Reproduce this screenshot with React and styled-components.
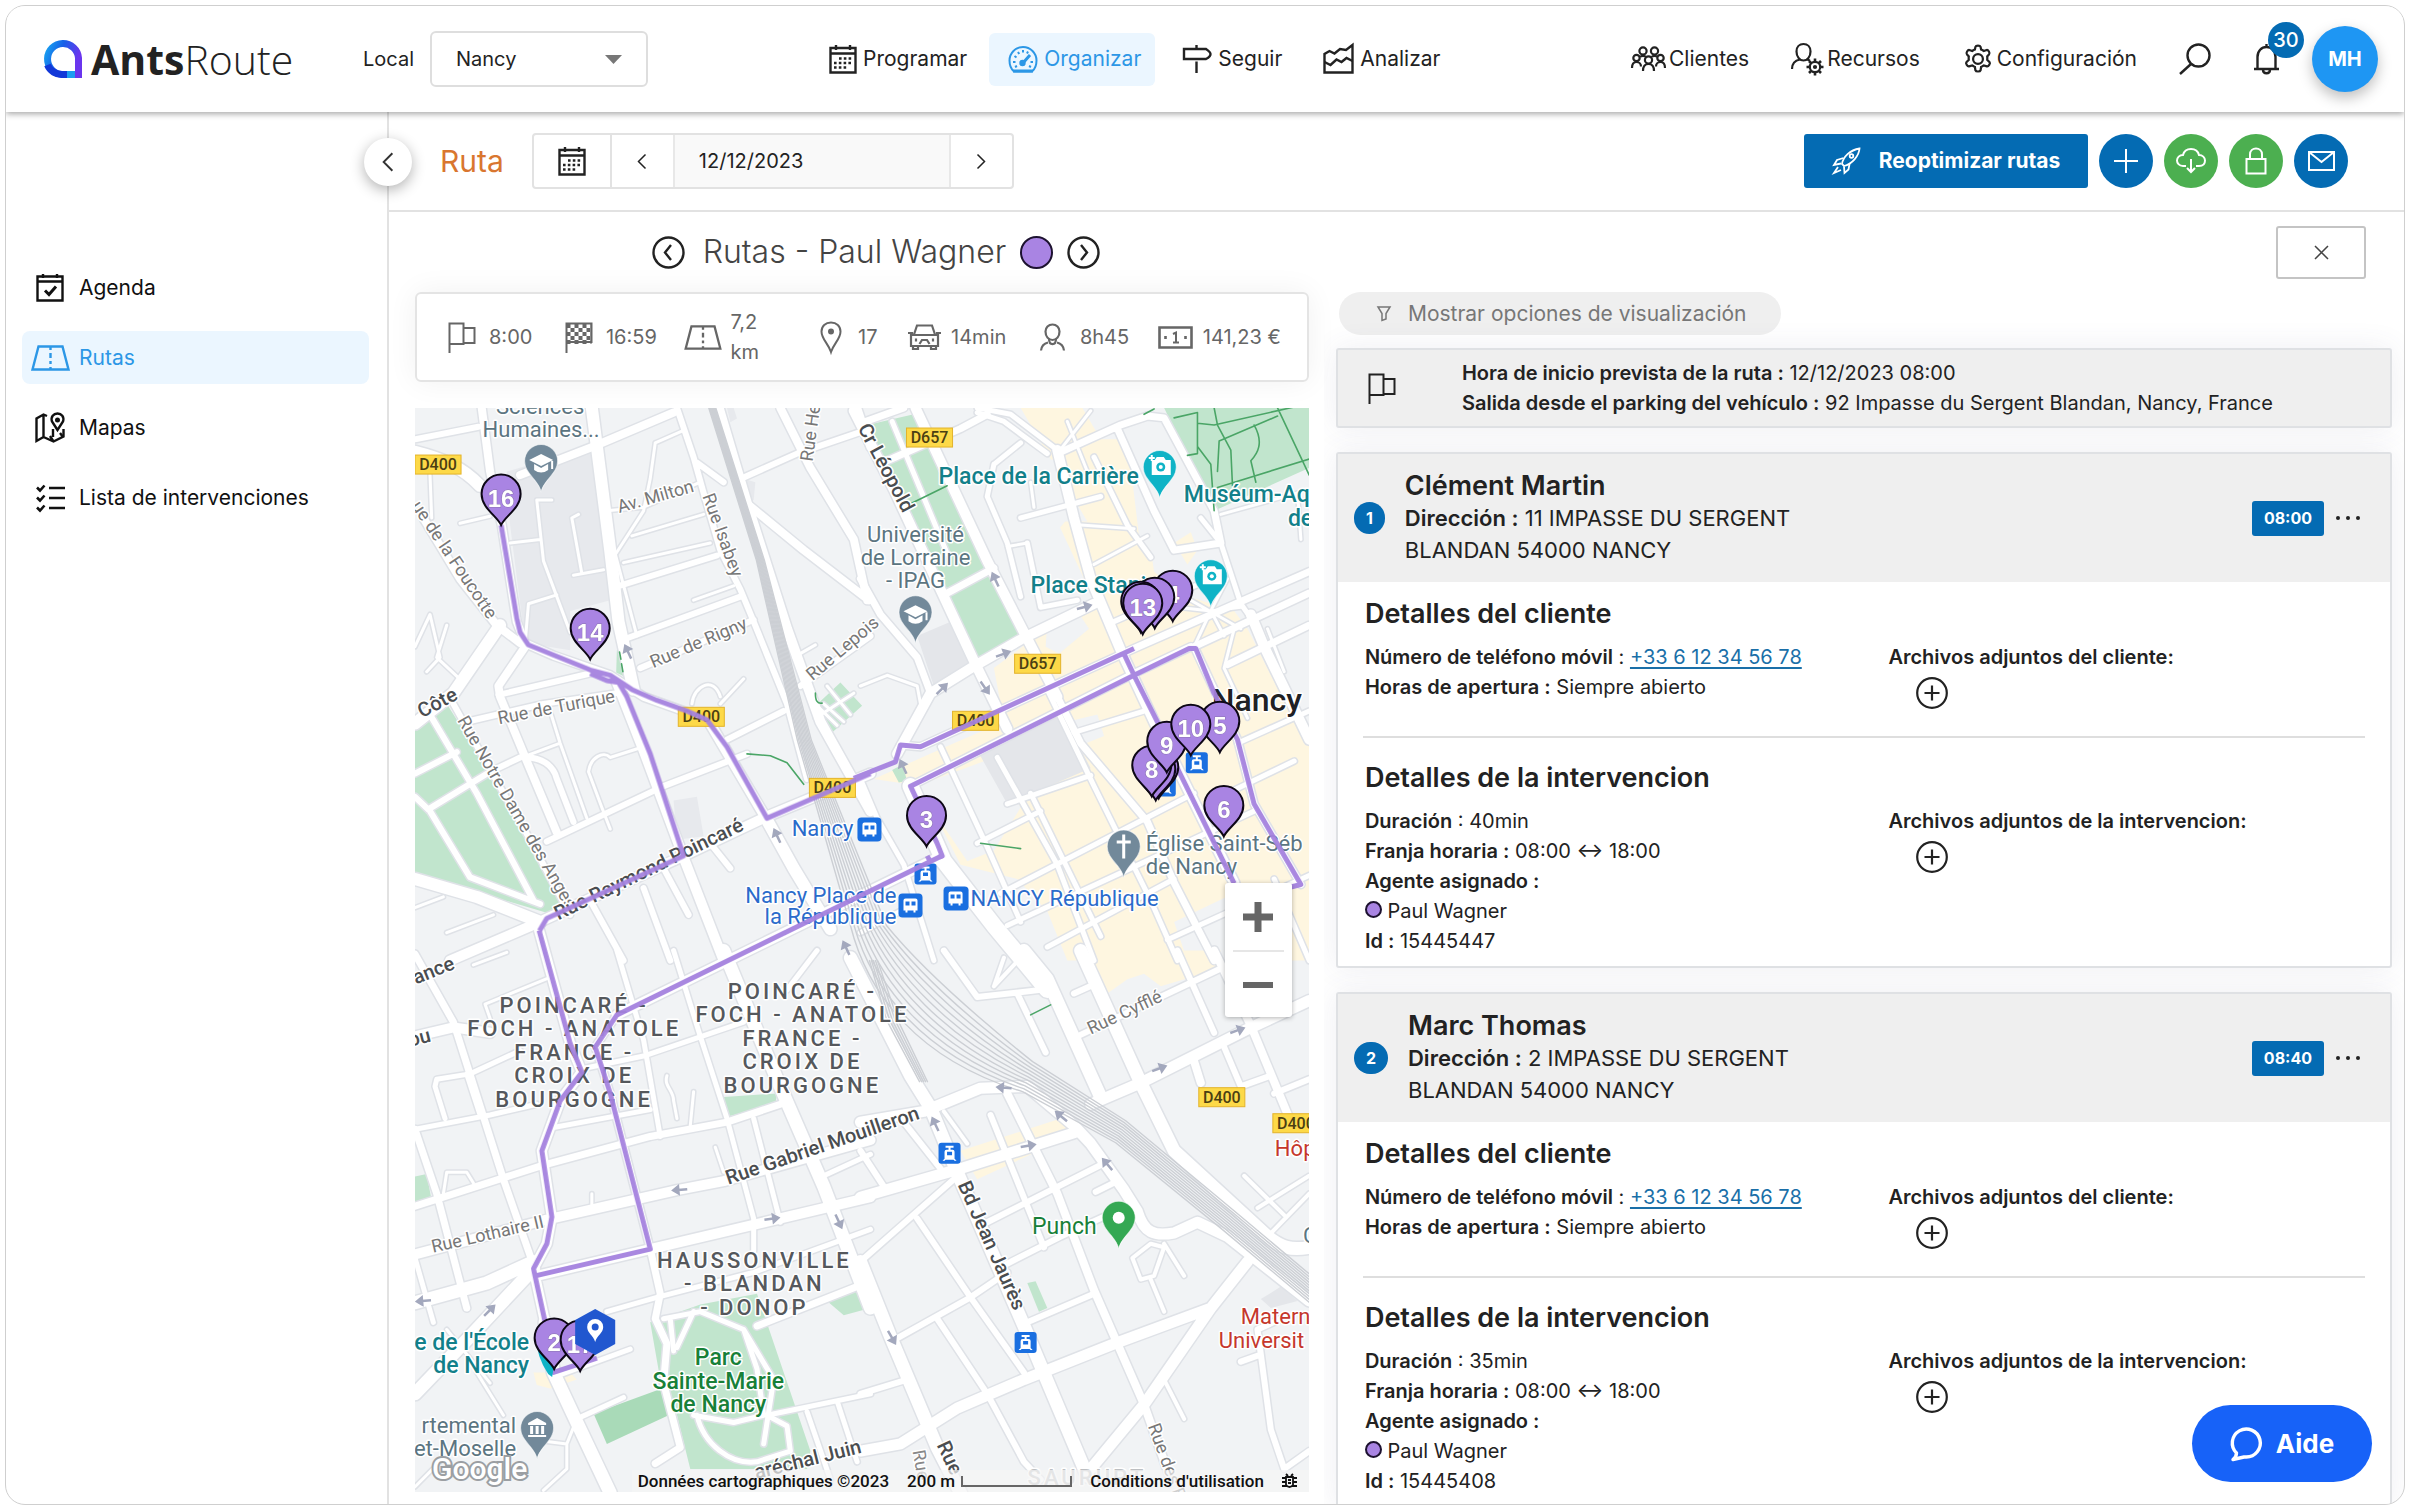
import React from "react";
import styled, { createGlobalStyle } from "styled-components";

const GlobalStyle = createGlobalStyle`
  * {
    box-sizing: border-box;
  }
  body {
    margin: 0;
    background: #fff;
    color: #222;
    font-family: Inter, "Liberation Sans", sans-serif;
    font-size: 20px;
    line-height: 30px;
  }
  button,
  input,
  select {
    font: inherit;
    color: inherit;
  }
  button {
    padding: 0;
    border: none;
    background: none;
    cursor: pointer;
  }
  h1,
  h2,
  h3,
  p {
    margin: 0;
  }
`;

/* ---------- icons ---------- */

const Svg = styled.svg`
  display: block;
  flex: none;
  fill: none;
  stroke: currentColor;
  overflow: visible;
`;

const Icon = ({ w = 32, h = 32, sw = 2, box, children }) => (
  <Svg
    width={w}
    height={h}
    viewBox={box || `0 0 ${w} ${h}`}
    strokeWidth={sw}
    aria-hidden="true"
  >
    {children}
  </Svg>
);

const CalendarIcon = () => (
  <Icon w={28} h={30} sw={2.4}>
    <path d="M1.5 4h25v24.500h-25zM1.500 9.500h25" />
    <path d="M7 1v5M21 1v5" />
    <path
      d="M10 14.500h14M5 19h19M5 23.500h14"
      strokeWidth="2.600"
      strokeDasharray="2.600 2.200"
    />
  </Icon>
);

const GaugeIcon = () => (
  <Icon w={30} h={28}>
    <path d="M6 26.500C3 24 1.500 20 1.500 15.500a13.500 13.500 0 0 1 27 0C28.500 20 27 24 24 26.500z" />
    <path d="M5 26h20" strokeWidth="3" />
    <path d="M15 18l7-8" strokeWidth="3" />
    <circle cx="14.500" cy="18" r="2.200" fill="currentColor" />
    <path d="M5 17h2.500M22.500 17h2.500M6.500 11l2 1.500M10 7l1.200 2M15 5v2.500M20 6.500l-1 2M7 22l2-1M23 22l-2-1" />
  </Icon>
);

const SignIcon = () => (
  <Icon w={30} h={30} sw={2.400}>
    <path d="M2 5h22c3 2 4.500 3.500 4.500 5S27 13.500 24 15H2z" />
    <path d="M14.500 1v4M14.500 17.500V29" />
  </Icon>
);

const ChartIcon = () => (
  <Icon w={31} h={30} sw={2.400}>
    <path d="M1.500 28.500V10l5-3 5 2.500L17 5l6 1 6.500-5v27.500z" />
    <path d="M1.500 18l6 3 6-5.500 5 2.500 5-4 6 3" />
  </Icon>
);

const PeopleIcon = () => (
  <Icon w={35} h={26} sw={2.200}>
    <circle cx="12" cy="5" r="3.600" />
    <circle cx="23.500" cy="5" r="3.600" />
    <circle cx="5.500" cy="12" r="3.200" />
    <circle cx="29.500" cy="12" r="3.200" />
    <circle cx="17.500" cy="14" r="3.600" />
    <path d="M1 22c0-4 2-6 4.500-6S10 18 10 20.500M25 20.500c0-2.500 2-4.500 4.500-4.500S34 18 34 22M12 25c0-4.500 2-7 5.500-7s5.500 2.500 5.500 7" />
    <path d="M9 11c1-1.500 5-1.500 6 0M20.500 11c1-1.500 5-1.500 6 0" />
  </Icon>
);

const UserGearIcon = () => (
  <Icon w={33} h={34} sw={2.200}>
    <path d="M12.500 2c4 0 7 3 7 7.500 0 5-3 9-7 9s-7-4-7-9C5.500 5 8.500 2 12.500 2z" />
    <path d="M1 27c0-5 3-8.500 8-9.500M16 17.500l3 1" />
    <circle cx="24" cy="25" r="5.200" />
    <circle cx="24" cy="25" r="1" fill="currentColor" />
    <path
      d="M24 16.500v3M24 30.500v3M15.500 25h3M29.500 25h3M18 19l2 2M28 29l2 2M30 19l-2 2M20 29l-2 2"
      strokeWidth="2.600"
    />
  </Icon>
);

const GearIcon = () => (
  <Icon w={32} h={32} box="2 .5 20 21.500" sw={1.500}>
    <path d="M10.300 3c.3-1 3.100-1 3.400 0l.4 1.900c.6.200 1.200.6 1.800 1l1.900-.7c1-.3 2.500 2.100 1.700 2.900l-1.300 1.400c.1.800.1 1.500 0 2.300l1.600 1.600c.7.800-.8 3.100-1.800 2.800l-2.100-.6c-.5.400-1.100.8-1.800 1l-.4 2.300c-.3 1-3.100 1-3.400 0l-.4-2.300c-.7-.2-1.300-.6-1.800-1l-2.100.6c-1 .3-2.500-2-1.800-2.800l1.600-1.600c-.1-.8-.1-1.500 0-2.300L4.500 8.100c-.8-.8.700-3.200 1.700-2.900l1.900.7c.6-.4 1.200-.8 1.800-1z" />
    <circle cx="12" cy="11.200" r="3.300" />
  </Icon>
);

const SearchIcon = () => (
  <Icon w={32} h={32} sw={2.400}>
    <circle cx="19.500" cy="12.500" r="11" />
    <path d="M12 21L1 31" />
  </Icon>
);

const BellIcon = () => (
  <Icon w={27} h={32} sw={2.400}>
    <path d="M13.500 4V1M4.500 25V14c0-6 4-10 9-10s9 4 9 10v11M1 26h25" />
    <path d="M10 26.500c0 5 7 5 7 0" />
  </Icon>
);

const RocketIcon = () => (
  <Icon w={29} h={28} sw={1.800}>
    <path d="M10 17c1-7 8-14 17.500-15.500C27 9 20 17 12 19z" />
    <circle cx="19.500" cy="9" r="1.800" />
    <path d="M11.500 11L5 13l-3 5 7-1.500M17.500 17l-1 5.500-4 3.500-.5-6.500M6 20l-4 6 7-3" />
  </Icon>
);

const PlusIcon = () => (
  <Icon w={24} h={24}>
    <path d="M12 0v24M0 12h24" />
  </Icon>
);

const CloudIcon = () => (
  <Icon w={30} h={26}>
    <path d="M10 18H7c-4 0-6-3-6-5.500C1 9.500 3.500 7 7 7c1-4 4-6 8-6s7 2 8 6c3.500 0 6 2.500 6 5.500S27 18 23 18h-3" />
    <path d="M15 11v13M11 20l4 4 4-4" />
  </Icon>
);

const LockIcon = () => (
  <Icon w={22} h={28}>
    <path d="M1.500 12h19v14.500h-19zM5 12V7.500C5 -.5 17 -.5 17 7.500V12" />
  </Icon>
);

const MailIcon = () => (
  <Icon w={27} h={20}>
    <path d="M1 1h25v18H1zM1 1l12.500 10L26 1" />
  </Icon>
);

const CloseIcon = () => (
  <Icon w={13} h={13} sw={1.500}>
    <path d="M0 0l13 13M13 0L0 13" />
  </Icon>
);

const Chevron = ({ right, w = 8, h = 15 }) => (
  <Icon w={w} h={h} box="0 0 8 15" sw={1.500}>
    <path d={right ? "M0.500 0.500l7 7-7 7" : "M7.500 0.500l-7 7 7 7"} />
  </Icon>
);

const CircleChevron = ({ right }) => (
  <Icon w={33} h={33} sw={2.400}>
    <circle cx="16.500" cy="16.500" r="15" />
    <path d={right ? "M14 9l6 7.500-6 7.500" : "M19 9l-6 7.500 6 7.500"} />
  </Icon>
);

const CirclePlus = () => (
  <Icon w={32} h={32} sw={2.200}>
    <circle cx="16" cy="16" r="14.800" />
    <path d="M16 8.500v15M8.500 16h15" />
  </Icon>
);

const AgendaIcon = () => (
  <Icon w={28} h={29} sw={2.400}>
    <path d="M1.500 3.500h25v24h-25zM1.500 8.500h25M7 1v4M21 1v4" />
    <path d="M9 17.500l4 4 7-8" strokeWidth="3" />
  </Icon>
);

const RoadIcon = ({ w = 39, h = 26 }) => (
  <Icon w={w} h={h} box="0 0 39 26" sw={2.400}>
    <path d="M7.500 1.500h24l6 23h-36z" />
    <path d="M19.500 2v3M19.500 8v5M19.500 16v3M19.500 22v2" />
  </Icon>
);

const MapIcon = () => (
  <Icon w={30} h={31} sw={2.400}>
    <path d="M12 4L8.500 2.500l-7 4V29l7-4 10 4.500 10-5V17M8.500 3v22M15 24l3.500 5.500" />
    <path d="M22.500 18L17 9.500C15.500 5 18.500 1.500 22.500 1.500S29.500 5 28 9.500z" />
    <circle cx="22.500" cy="8" r="1.300" fill="currentColor" />
    <path d="M18 17v8M25 21l3 4" />
  </Icon>
);

const ListIcon = () => (
  <Icon w={29} h={28} sw={2.600}>
    <path d="M13 4h16M13 14h16M13 24h16" />
    <path d="M1 3.500l3 3 4.500-5M1 13.500l3 3 4.500-5M1 23.500l3 3 4.500-5" />
  </Icon>
);

const FlagIcon = () => (
  <Icon w={28} h={31}>
    <path d="M1.500 31V1.500h14V22h-14M15.500 6H26.500v15h-11v-4" />
  </Icon>
);

const CheckeredIcon = () => (
  <Icon w={28} h={31}>
    <path d="M1.500 31V1.500h25V20h-25" />
    <path
      d="M1.500 4h25M1.500 12h25M1.500 20h25"
      strokeWidth="4"
      strokeDasharray="4 4"
    />
    <path
      d="M5.500 8h21M5.500 16h21"
      strokeWidth="4"
      strokeDasharray="4 4"
    />
  </Icon>
);

const PlaceIcon = () => (
  <Icon w={22} h={32}>
    <path d="M11 31C8 22 1.500 18 1.500 10.500 1.500 5 5.500 1.500 11 1.500s9.500 3.500 9.500 9C20.500 18 14 22 11 31z" />
    <circle cx="11" cy="10.500" r="2" fill="currentColor" />
  </Icon>
);

const CarIcon = () => (
  <Icon w={33} h={26} sw={2.200}>
    <path d="M6 10.500L9 1.500h15l3 9M3 11h27v11H3zM0 9h5M28 9h5M5 22v3h5v-3M23 22v3h5v-3" />
    <path d="M8 14.500v3M25 14.500v3M11.500 20l2.500-4h5l2.500 4" />
  </Icon>
);

const PersonIcon = () => (
  <Icon w={25} h={28} sw={2.200}>
    <path d="M12.500 1.500c4 0 7 3 7 7 0 5-3 8.500-7 8.500s-7-3.500-7-8.500c0-4 3-7 7-7z" />
    <path d="M9 15.500c0 7.500 7 7.500 7 0M1 27.500c.5-4.500 3-7 7-8M24 27.500c-.5-4.500-3-7-7-8" />
  </Icon>
);

const MoneyIcon = () => (
  <Icon w={35} h={23} sw={2.600}>
    <path d="M1.500 1.500h32v20h-32z" />
    <path d="M15 8l3-1.500v10M15 16.500h6" strokeWidth="2" />
    <path d="M7.500 10v3M27.500 10v3" />
  </Icon>
);

const FilterIcon = () => (
  <Icon w={14} h={15} sw={1.500}>
    <path d="M1 1h12L9 7.500V13l-4 1.500v-7z" />
  </Icon>
);

const ChatIcon = () => (
  <Icon w={32} h={34} sw={3.400}>
    <path
      strokeLinejoin="round"
      d="M6.500 26A14 14 0 1 1 16 30H14L3 32.500C5.500 30.500 6.500 28.500 6.500 26z"
    />
  </Icon>
);

/* ---------- header ---------- */

const Frame = styled.div`
  display: flex;
  flex-direction: column;
  height: calc(100vh - 10px);
  margin: 5px;
  border: 1px solid #cfcfcf;
  border-radius: 20px;
  overflow: hidden;
  position: relative;
`;

const Header = styled.header`
  display: flex;
  align-items: center;
  flex: none;
  height: 106px;
  padding: 0 26px 0 37px;
  background: #fff;
  box-shadow: 0 2px 6px rgba(0, 0, 0, 0.35);
  position: relative;
  z-index: 2;
`;

const Logo = styled.a`
  display: flex;
  align-items: center;
  gap: 8px;
  width: 256px;
  color: #222;
  text-decoration: none;
  font-family: "Open Sans", "Noto Sans", sans-serif;
  font-size: 41px;
  font-weight: 300;
  line-height: 48px;
  b {
    font-weight: 700;
  }
`;

const Agency = styled.div`
  display: flex;
  align-items: center;
  gap: 16px;
  margin-left: 64px;
`;

const SelectBox = styled.div`
  position: relative;
  width: 218px;
  select {
    appearance: none;
    width: 100%;
    height: 56px;
    padding: 0 24px;
    border: 2px solid #dedede;
    border-radius: 6px;
    background: #fff;
  }
  svg {
    position: absolute;
    right: 26px;
    top: 24px;
    pointer-events: none;
  }
`;

const Nav = styled.nav`
  display: flex;
  gap: 8px;
  margin-left: 162px;
  font-size: 21px;
`;

const NavLink = styled.a`
  display: flex;
  align-items: center;
  gap: 6px;
  height: 53px;
  padding: 0 14px 0 19px;
  border-radius: 6px;
  background: ${({ $active }) => ($active ? "#ebf6ff" : "none")};
  color: ${({ $active }) => ($active ? "#2c97e6" : "#222")};
  text-decoration: none;
`;

const HeaderTools = styled.div`
  display: flex;
  align-items: center;
  gap: 42px;
  margin-left: auto;
  font-size: 21px;
`;

const ToolLink = styled.a`
  display: flex;
  align-items: center;
  gap: 3px;
  color: #222;
  text-decoration: none;
`;

const BellButton = styled.button`
  position: relative;
  span {
    position: absolute;
    left: 15px;
    top: -21px;
    width: 36px;
    height: 36px;
    border-radius: 50%;
    background: #046bb3;
    color: #fff;
    font-size: 20px;
    font-weight: 500;
    line-height: 36px;
  }
`;

const Avatar = styled.button`
  width: 66px;
  height: 66px;
  margin-left: -10px;
  border-radius: 50%;
  background: #1e96f3;
  box-shadow: 0 6px 14px rgba(0, 0, 0, 0.25);
  color: #fff;
  font-size: 20px;
  font-weight: 700;
`;

/* ---------- sidebar ---------- */

const Body = styled.div`
  display: flex;
  flex: 1;
  min-height: 0;
`;

const Sidebar = styled.aside`
  position: relative;
  flex: none;
  width: 383px;
  padding: 149px 18px 0 16px;
  border-right: 2px solid #e2e2e2;
`;

const SideList = styled.nav`
  display: flex;
  flex-direction: column;
  gap: 17px;
  font-size: 21px;
`;

const SideLink = styled.a`
  display: grid;
  grid-template-columns: 40px 1fr;
  align-items: center;
  gap: 9px;
  height: 53px;
  padding-left: 8px;
  border-radius: 8px;
  background: ${({ $active }) => ($active ? "#ebf6ff" : "none")};
  color: ${({ $active }) => ($active ? "#2c97e6" : "#111")};
  text-decoration: none;
  svg {
    justify-self: center;
  }
`;

const Collapse = styled.button`
  position: absolute;
  right: -25px;
  top: 26px;
  display: grid;
  place-items: center;
  width: 48px;
  height: 48px;
  border-radius: 50%;
  background: #fff;
  box-shadow: 0 4px 14px rgba(0, 0, 0, 0.3);
  color: #333;
`;

/* ---------- toolbar ---------- */

const Main = styled.main`
  display: flex;
  flex-direction: column;
  flex: 1;
  min-width: 0;
`;

const Toolbar = styled.div`
  display: flex;
  align-items: center;
  flex: none;
  height: 100px;
  padding: 0 56px 0 51px;
  border-bottom: 2px solid #e2e2e2;
`;

const PageTitle = styled.h1`
  color: #d9762f;
  font-size: 30px;
  font-weight: 400;
`;

const DatePicker = styled.div`
  display: flex;
  height: 56px;
  margin-left: 28px;
  border: 2px solid #e2e2e2;
  border-radius: 4px;
  button {
    display: grid;
    place-items: center;
    width: 61px;
    color: #222;
  }
  button:first-child {
    width: 78px;
    border-right: 2px solid #e2e2e2;
  }
  input {
    width: 278px;
    padding: 0 24px;
    border: solid #e8e8e8;
    border-width: 0 2px;
    background: #f9f9f9;
  }
`;

const Actions = styled.div`
  display: flex;
  gap: 11px;
  margin-left: auto;
`;

const Reoptimize = styled.button`
  display: flex;
  align-items: center;
  justify-content: center;
  gap: 18px;
  width: 284px;
  height: 54px;
  border-radius: 3px;
  background: #046bb3;
  color: #fff;
  font-size: 21px;
  font-weight: 700;
`;

const RoundButton = styled.button`
  display: grid;
  place-items: center;
  width: 54px;
  height: 54px;
  border-radius: 50%;
  background: ${({ $green }) => ($green ? "#4caf50" : "#046bb3")};
  color: #fff;
`;

/* ---------- route column ---------- */

const Content = styled.div`
  display: grid;
  grid-template-columns: minmax(0, 893fr) minmax(0, 1055fr);
  gap: 27px;
  flex: 1;
  min-height: 0;
  padding: 0 12px 0 26px;
`;

const RouteColumn = styled.section`
  display: flex;
  flex-direction: column;
  min-height: 0;
  padding-bottom: 12px;
`;

const RouteTitle = styled.div`
  display: flex;
  align-items: center;
  justify-content: center;
  gap: 14px;
  height: 80px;
  padding-left: 28px;
  h2 {
    padding-left: 4px;
    color: #444;
    font-size: 32px;
    font-weight: 300;
  }
`;

const AgentDot = styled.span`
  display: inline-block;
  width: ${({ $size }) => $size}px;
  height: ${({ $size }) => $size}px;
  border: 2px solid #1d1230;
  border-radius: 50%;
  background: #a984e3;
`;

const Stats = styled.ul`
  display: flex;
  align-items: center;
  justify-content: space-between;
  flex: none;
  height: 90px;
  margin: 0 0 26px;
  padding: 0 26px;
  border: 2px solid #e4e4e4;
  border-radius: 6px;
  box-shadow: 0 0 30px rgba(0, 0, 0, 0.06);
  color: #666;
  list-style: none;
`;

const Stat = styled.li`
  display: grid;
  grid-template-columns: 38px auto;
  align-items: center;
  gap: 8px;
  svg {
    justify-self: center;
  }
  span {
    width: ${({ $narrow }) => ($narrow ? "54px" : "auto")};
  }
`;

const MapBox = styled.div`
  position: relative;
  flex: 1;
  min-height: 0;
  overflow: hidden;
  background: #f1f3f5;
  > svg {
    display: block;
    width: 100%;
    height: 100%;
  }
`;

const ZoomControl = styled.div`
  position: absolute;
  right: 17px;
  bottom: 475px;
  width: 67px;
  padding: 0 8px;
  border-radius: 3px;
  background: #fff;
  box-shadow: 0 1px 5px rgba(0, 0, 0, 0.3);
  button {
    display: grid;
    place-items: center;
    width: 100%;
    height: 67px;
    color: #666;
  }
  button + button {
    border-top: 2px solid #e6e6e6;
  }
`;

const MapFooter = styled.div`
  position: absolute;
  right: 0;
  bottom: 0;
  display: flex;
  align-items: center;
  gap: 18px;
  height: 22px;
  padding: 0 12px 0 6px;
  background: rgba(245, 245, 245, 0.7);
  color: #111;
  font-family: Roboto, sans-serif;
  font-size: 17px;
  font-weight: 500;
  line-height: 22px;
  a {
    color: inherit;
    text-decoration: none;
  }
`;

const Scale = styled.span`
  display: flex;
  align-items: center;
  gap: 6px;
  &::after {
    content: "";
    width: 107px;
    height: 9px;
    border: 2px solid #666;
    border-top: none;
  }
`;

/* ---------- map drawing ---------- */

// The map is cut in four tiles that share one unit grid.
const tiles = {
  nw: "translate(410 400) scale(.33333 .35714)",
  ne: "translate(860 400) scale(.33333 .35714)",
  sw: "translate(410 950) scale(.33333 .35714)",
  se: "translate(860 950) scale(.33333 .35714)",
};

const areas = [
  ["nw", "#e7e9ed", "M290 200L545 130 570 300 600 560 480 590 480 700 345 680 300 350z"],
  ["nw", "#e7e9ed", "M790 1120l70-10 20 110-80 10zM950 22l20 0 10 30-20 10zM1000 220l35 10-5 50-25 10z"],
  ["nw", "#c1e5cd", "M15 910L110 850 300 1130 470 1400 430 1440 15 1325z"],
  ["nw", "#c1e5cd", "M1210 860L1290 790 1355 855 1265 930zM620 700l20-8 18 60-14 22-26-12z"],
  ["ne", "#fef6e0", "M480 22H665L720 110 800 110 840 420 870 420 880 480 950 540 1120 590 1160 640 1300 900 1345 950V1568H620L560 1430 470 1340 300 1300 180 1080 40 1060 280 960 430 900 400 750 500 680 620 610 700 560 590 340 680 340z"],
  ["ne", "#fef6e0", "M940 400L990 370 1010 420 980 460z"],
  ["ne", "#f1f3f5", "M560 620l90-30 35 50-90 70-40-20zM480 190L600 160 640 310 560 400 490 420zM620 900l90-20 20 60-80 30zM860 90L940 130 1030 350 940 380z"],
  ["ne", "#f1f3f5", "M170 1080L400 1000 480 1140 400 1260 320 1290 240 1180zM940 1460L1120 1380 1180 1568 980 1568z"],
  ["ne", "#e4e6ea", "M350 980L600 870 690 1030 440 1130zM170 660L270 620 340 740 220 800z"],
  ["ne", "#c1e5cd", "M910 22H1345V190L1060 310zM20 70L160 40 400 470 260 540zM265 540L390 480 480 660 350 720zM95 1035l30-15 15 45-25 5z"],
  ["sw", "#c1e5cd", "M930 410l170-10-5 30-145 35zM15 632l35-7 15 75-50 8zM720 1040L870 990 1040 960 1200 1400 1190 1450H840L800 1300 750 1200zM1250 980l90-40 40 60-80 20z"],
  ["sw", "#a9dab8", "M550 1295L755 1225 775 1300 590 1380z"],
  ["sw", "#fef6e0", "M370 1180l110 0 20 20-80 25-40-10z"],
  ["se", "#fef6e0", "M650 0H1080V50L900 100 850 65 800 80 740 120zM300 560L600 470 650 510 350 640z"],
  ["se", "#c1e5cd", "M500 930l25-5 35 75-25 10z"],
  ["se", "#e4e6ea", "M1200 975l60-35 50 40-80 20z"],
];

const roads = [
  ["nw", 12, "M545 22L560 130 600 420 625 620 670 810M15 145C100 165 160 190 210 240M270 630L130 820 15 905M15 1340L200 1390 390 1460M1070 1175L1150 1310 1260 1480"],
  ["nw", 10, "M925 22L1010 290 1130 640 1230 900 1380 1150M620 790L700 980 780 1180 820 1280 940 1568M400 1455L820 1275 1070 1165 1380 1045M390 1460L120 1568M890 890L1070 1175"],
  ["nw", 8, "M215 22L240 200 275 350 320 620 345 680 430 715 600 770 700 830 880 890M330 210L550 130 790 35M1110 22L1200 190 1330 390 1370 560M1010 290L1180 420 1375 560M40 330L150 500 260 630 330 680M345 690L265 800 270 830 350 1010 440 1210M1340 22l40 110"],
  ["nw", 6, "M800 22L850 160 880 260 930 420 990 530 1030 620 1130 850 1190 1060M15 110L205 75M980 225L1160 150 1380 80M860 175L940 230M610 525L920 435M640 670L990 550M690 750L1030 615M265 825L540 765M170 900L400 850 620 820M130 850L250 1050 360 1230 480 1440M60 880L200 1100 370 1400M15 1045L140 985M55 1145L240 1040 330 1000M15 1110L60 1150 180 1335 390 1410M350 1000C390 1000 430 1020 440 1060L490 1180M410 1235L760 1080 1010 990M950 950L1120 870M540 1400L640 1568M700 1365L780 1568M760 1310L835 1440M900 1240L960 1310M1170 800L1380 660"],
  ["nw", 3, "M735 120L820 85M735 120L720 220 700 310 610 440M665 380L880 320M640 455L900 400M605 395L680 660M490 490L580 475M515 485L485 330 505 320M850 560L970 520M420 870L450 960 530 1170M350 995L450 960M845 850C850 800 910 770 930 830M930 850L1000 780M600 1200L575 1140 535 1040C540 1000 580 980 600 1000L700 970M15 690L60 600 90 720 50 760M110 630L80 720 160 790M150 345L240 325M60 210L65 330M380 280h45M380 280L400 450 480 650M300 400L390 390M345 680L355 570 440 545M1150 720L1215 685M590 310L700 300 870 230M15 1420L100 1390M110 1490L250 1440M1215 890L1330 820M1240 850L1300 900M1250 800L1320 880M1225 860L1280 910"],
  ["ne", 16, "M150 1080L250 1290 400 1470 560 1650"],
  ["ne", 10, "M-20 30L100 250 340 730 440 920M165 22L380 450 490 650 590 830M110 990L210 820 340 745 490 665 700 570M590 140L640 330 690 500 780 700 880 900 950 1030 1120 1350 1180 1568M1170 600L1210 690 1345 950"],
  ["ne", 7, "M15 60L130 22M260 540L400 470M80 170L300 80 380 40M590 150L780 70 860 45 910 50 1060 310 1080 400 940 420 880 310 770 80M120 965L180 970 820 695 1345 480M150 1080L820 765 990 690M1000 690L1130 950 1180 1130 1320 1355M1000 690L1345 540M1100 740L1345 630M0 500L60 600 170 720 210 820M590 830L660 960 860 1180 940 1350 1060 1568"],
  ["ne", 5, "M95 60L260 430M590 140L450 40 350 22M350 35L430 60 480 95 560 150M400 180L380 270 440 400 480 550M400 180L480 120M480 330L720 270M500 400L540 580 650 560M700 160L800 350 870 440M240 970L380 1250 480 1460M560 810L700 1080 870 1400 950 1568M510 1100L720 1500M410 1000L590 1300 700 1568M640 930L850 870M440 1130L690 1050M350 1240L540 1150M420 1380L1000 1100M440 1470L1180 1150M560 1530L940 1340M920 1510L1345 1330M1130 960L1345 870M0 1060L50 1170 130 1300 220 1568M1080 400L1140 570 1170 610M1020 330L1080 400M0 1490L140 1420M1240 1340L1345 1568M1100 1100L1300 1010M760 620L1050 500"],
  ["ne", 3, "M660 350L820 360M700 460L860 380M950 580L1050 590 1140 580M990 560L1140 640M1050 590L1000 690M1050 590L1090 660M1050 590L1100 500M180 850L170 800 80 770 0 800M510 230L520 300M440 410L500 400M620 60L680 200M690 30L590 150M1120 640L1090 750 1160 890M1270 760L1220 640M1080 320L1310 260M1310 260L1320 390"],
  ["sw", 13, "M940 0L1100 360 1240 660 1380 1000M15 985L230 930 370 870M370 890L200 1060 15 1240M405 1040L430 1180 490 1300 600 1517"],
  ["sw", 10, "M380 910L720 835 1380 690M15 850L400 755 800 670 940 645 1380 530M387 -56L480 260 515 340 450 420 395 560 425 745 410 820 370 890 405 1040M1596 -266L620 180M15 240L130 215 240 230"],
  ["sw", 7, "M620 180L555 270 600 400 720 835 750 960 735 1030 770 1100 760 1210 810 1390 735 1435M15 715L400 600 720 520 950 480 1110 430M15 10L130 200 280 640 370 880M15 500L80 680 170 1000M1040 1050L1340 940"],
  ["sw", 5, "M15 500L240 460 380 430M430 495L720 445M105 470L75 380 80 360 180 345 330 280M520 330L700 295 1000 200M170 345L210 460M620 0L700 250 750 520M790 0L870 240 950 470 1030 750V840M1030 470L1110 760M1220 0L1130 110M590 1010L740 970 1030 900 1380 780M500 1310L640 1250M1070 1300L1380 1240M440 1190L660 1115M15 860L70 1040M1240 630L1380 570M1190 1290L1260 1480M1280 1260L1340 1430"],
  ["sw", 3, "M190 40L290 5M225 150L420 75M225 150L240 190M200 1180L280 1300M380 1370L470 1380 500 1310M470 1380V1450L400 1510M770 350C760 380 790 390 790 420L800 470M850 395L840 490M100 680L110 620 170 620 190 650M545 710V680M915 550L940 620M110 1060L240 1210M15 1500L100 1420"],
  ["sw", 5, "M760 1030L870 1010 1000 1060 1040 1170 1060 1300 970 1320 850 1300M850 1010L800 1110M860 1300C880 1380 960 1440 1040 1430L1140 1400 1130 1330 1070 1300M1000 1060L1090 1200 1060 1380M780 1030L790 1120"],
  ["se", 13, "M-30 20L150 350 210 440 290 620 490 1050 680 1470M490 0L560 80 720 410M660 0L840 370 940 560 1220 800C1260 830 1290 840 1345 830M0 870L90 1080 230 1390 300 1517"],
  ["se", 11, "M0 480L190 450 360 385 500 380 640 490 690 540 790 670 830 730C850 790 880 800 940 790L1010 760 1100 800 1345 980M0 690L300 610 640 510M690 430L840 370 1160 220 1345 140M1050 1000L850 1270 690 1450M0 1400L120 1380 290 1280 490 1200 760 1100 1050 1000 1160 870"],
  ["se", 8, "M1060 0L1170 210 1290 480M440 400L590 680 700 950 850 1270 930 1480M1000 310L1020 370"],
  ["se", 6, "M250 0L350 130 540 110 560 80M470 120L555 285M650 240L1080 50M640 120L700 95M950 0L1060 230M1090 270L1140 380 1230 350M1240 400L1345 360M390 460L550 830M380 760L720 600M410 890L600 800 740 740M705 675L770 645M500 1040L700 960M170 750L330 970 490 1180M0 870L280 640M100 1090L330 970 440 900M230 1030L380 1240 490 1430 540 1480M0 1240L140 1200M1140 1150L1200 1130 1190 1060 1260 1030M1200 1130L1230 1340 1270 1450 1345 1400M130 480L240 610M0 560L70 660"],
  ["se", 4, "M400 100L470 30M430 20L400 100M1150 630L1270 740M1190 720L1345 630M1220 800L1345 680M910 820L970 910M870 920L910 1010M815 860L870 820 910 830 880 910 840 920zM910 1200L970 1310M250 450L320 540"],
];

const thinGreen = [
  ["nw", "M1010 990L1080 995 1130 1015 1180 1075M1215 820C1215 840 1220 850 1235 848M628 705l4 20M634 738l4 22"],
  ["ne", "M150 290L260 240M850 40L880 25M360 1240L480 1255M940 50L1010 35V150L980 155M1010 65L1060 70 1345 10M1060 22L1070 70 1110 140 1115 240M1075 115L1250 45M1180 70C1210 120 1190 150 1170 170L1185 230M1250 22L1345 210M1010 130L1050 180 1060 310M1070 245L1345 165M1075 115L1070 200"],
  ["se", "M510 180L570 152"],
];

const railOffsets = [-5, -4, -3, -2, -1, 0, 1, 2, 3, 4, 5];
const rail = (i) =>
  `M${712 + i * 0.7} 408L${760 + i * 0.8} 560L${804 + i * 1.4} 740L${868 + i * 3.6} 925` +
  `C${892 + i * 5} ${978 - i * 3} ${942 + i * 5} ${1034 - i * 5} ${1027 + i} ${1076 - i * 3}` +
  `L${1120 + i} ${1131 - i * 2.2}L${1227 + i} ${1219 - i * 2}L${1320 + i} ${1297 - i * 2}`;

const routes = [
  ["nw", "M273 350L320 610 330 650 355 685 540 755 600 770 665 810 740 840 830 870 890 895 950 970 1070 1170 1380 1045M540 765L590 785 625 790 650 830 720 990 820 1275 410 1450 388 1485"],
  ["ne", "M-20 1058L105 1012 120 965 180 970 820 695M235 1279L245 1275 230 1240 150 1080 820 770 985 695 1005 695 1060 820 1130 950 1180 1130 1320 1355 1290 1362M790 710L820 770 890 900 950 1030 1120 1352M200 1275l12 20"],
  ["sw", "M387 -56L480 260 515 340 450 420 395 560 425 745 410 820 370 890 405 1040 430 1180 560 1140M1596 -266L620 180 555 270 600 400 720 835 375 910"],
];

const labels = [
  { x: 540, y: 414, t: "Sciences", c: "#5b7581", a: "middle" },
  { x: 541, y: 437, t: "Humaines...", c: "#5b7581", a: "middle" },
  { x: 915, y: 542, t: "Université", c: "#5b7581", a: "middle" },
  { x: 915, y: 565, t: "de Lorraine", c: "#5b7581", a: "middle" },
  { x: 915, y: 588, t: "- IPAG", c: "#5b7581", a: "middle" },
  { x: 1145, y: 851, t: "Église Saint-Séb", c: "#5b7581" },
  { x: 1145, y: 874, t: "de Nancy", c: "#5b7581" },
  { x: 516, y: 1432, t: "rtemental", c: "#5b7581", a: "end" },
  { x: 516, y: 1455, t: "et-Moselle", c: "#5b7581", a: "end" },
  { x: 1302, y: 1242, t: "C", c: "#5b7581" },
  { x: 1138, y: 484, t: "Place de la Carrière", c: "#12808a", a: "end", s: 23, b: 1 },
  { x: 1183, y: 502, t: "Muséum-Aq", c: "#12808a", s: 23, b: 1 },
  { x: 1287, y: 526, t: "de", c: "#12808a", s: 23, b: 1 },
  { x: 1030, y: 593, t: "Place Stani", c: "#12808a", s: 23, b: 1 },
  { x: 529, y: 1349, t: "e de l'École", c: "#12808a", a: "end", s: 23, b: 1 },
  { x: 529, y: 1372, t: "de Nancy", c: "#12808a", a: "end", s: 23, b: 1 },
  { x: 853, y: 836, t: "Nancy", c: "#2a6bcb", a: "end" },
  { x: 896, y: 902, t: "Nancy Place de", c: "#2a6bcb", a: "end" },
  { x: 896, y: 923, t: "la République", c: "#2a6bcb", a: "end" },
  { x: 970, y: 905, t: "NANCY République", c: "#2a6bcb" },
  { x: 718, y: 1364, t: "Parc", c: "#188038", a: "middle", s: 23, b: 1 },
  { x: 718, y: 1388, t: "Sainte-Marie", c: "#188038", a: "middle", s: 23, b: 1 },
  { x: 718, y: 1411, t: "de Nancy", c: "#188038", a: "middle", s: 23, b: 1 },
  { x: 1096, y: 1233, t: "Punch", c: "#188038", a: "end", s: 23 },
  { x: 1274, y: 1155, t: "Hôp", c: "#c5372c" },
  { x: 1240, y: 1323, t: "Matern", c: "#c5372c" },
  { x: 1218, y: 1347, t: "Universit", c: "#c5372c" },
  { x: 1211, y: 711, t: "Nancy", c: "#202124", s: 32, b: 1 },
  { x: 619, y: 513, t: "Av. Milton", c: "#777", s: 18, r: -16 },
  { x: 702, y: 496, t: "Rue Isabey", c: "#777", s: 18, r: 70 },
  { x: 812, y: 462, t: "Rue Her", c: "#777", s: 18, r: -82 },
  { x: 411, y: 506, t: "ue de la Foucotte", c: "#777", s: 18, r: 56 },
  { x: 653, y: 668, t: "Rue de Rigny", c: "#777", s: 18, r: -23 },
  { x: 499, y: 724, t: "Rue de Turique", c: "#777", s: 18, r: -11 },
  { x: 812, y: 681, t: "Rue Lepois", c: "#777", s: 18, r: -40 },
  { x: 457, y: 720, t: "Rue Notre Dame des Anges", c: "#777", s: 18, r: 60 },
  { x: 433, y: 1252, t: "Rue Lothaire II", c: "#777", s: 18, r: -13 },
  { x: 1090, y: 1034, t: "Rue Cyfflé", c: "#777", s: 18, r: -25 },
  { x: 1147, y: 1425, t: "Rue des B", c: "#777", s: 18, r: 70 },
  { x: 912, y: 1450, t: "Rue", c: "#888", s: 18, r: 80 },
  { x: 857, y: 428, t: "Cr Léopold", c: "#4a4d50", s: 20, r: 62, b: 1 },
  { x: 422, y: 718, t: "Côte", c: "#4a4d50", s: 20, r: -28, b: 1 },
  { x: 558, y: 920, t: "Rue Raymond Poincaré", c: "#4a4d50", s: 20, r: -26, b: 1 },
  { x: 416, y: 984, t: "ance", c: "#4a4d50", s: 20, r: -22, b: 1 },
  { x: 410, y: 1046, t: "ou", c: "#4a4d50", s: 20, r: -14, b: 1 },
  { x: 728, y: 1184, t: "Rue Gabriel Mouilleron", c: "#4a4d50", s: 20, r: -19, b: 1 },
  { x: 957, y: 1184, t: "Bd Jean Jaurès", c: "#4a4d50", s: 20, r: 66, b: 1 },
  { x: 936, y: 1444, t: "Rue", c: "#4a4d50", s: 20, r: 65, b: 1 },
  { x: 756, y: 1478, t: "aréchal Juin", c: "#4a4d50", s: 20, r: -14, b: 1 },
];

const districts = [
  { x: 574, y: 1012, lines: ["POINCARÉ -", "FOCH - ANATOLE", "FRANCE -", "CROIX DE", "BOURGOGNE"] },
  { x: 802, y: 998, lines: ["POINCARÉ -", "FOCH - ANATOLE", "FRANCE -", "CROIX DE", "BOURGOGNE"] },
  { x: 754, y: 1267, lines: ["HAUSSONVILLE", "- BLANDAN", "- DONOP"] },
];

const shields = [
  [415, 455, "D400"],
  [678, 707, "D400"],
  [809, 778, "D400"],
  [906, 428, "D657"],
  [1014, 654, "D657"],
  [952, 711, "D400"],
  [1198, 1087, "D400"],
  [1272, 1113, "D400"],
];

const pois = [
  { x: 541, y: 492, c: "#72899a", kind: "school" },
  { x: 915, y: 643, c: "#72899a", kind: "school" },
  { x: 1159, y: 498, c: "#0fb3c6", kind: "camera" },
  { x: 1210, y: 607, c: "#0fb3c6", kind: "camera" },
  { x: 1123, y: 877, c: "#72899a", kind: "church" },
  { x: 537, y: 1458, c: "#72899a", kind: "museum" },
  { x: 1118, y: 1248, c: "#34a853", kind: "dot" },
];

const poiGlyph = {
  school: (
    <>
      <path d="M-12 -32L0 -38 12 -32 0 -26z" />
      <path d="M-7 -28v6q7 5 14 0v-6l-7 4zM10 -31h2v8h-2z" />
    </>
  ),
  camera: (
    <>
      <path d="M-8 -38h3l2-3h7l2 3h5v15H-8z" />
      <circle cy="-31" cx="1" r="4.500" fill="#0fb3c6" />
      <circle cy="-31" cx="1" r="2" />
      <path d="M-11 -41h2v-2h2v2h2v2h-2v2h-2v-2h-2z" />
    </>
  ),
  church: <path d="M-1.500 -43h3v6H7v3H1.500v15h-3v-15H-7v-3h5.500z" />,
  museum: <path d="M0 -41l9 5v2H-9v-2zM-7 -33h3v8h-3zM-1.500 -33h3v8h-3zM4 -33h3v8H4zM-9 -24H9v2H-9z" />,
  dot: <circle cy="-31" r="6" />,
};

const stations = [
  [857, 817, 24],
  [898, 893, 24],
  [943, 886, 25],
];

const trams = [
  [914, 863],
  [1185, 752],
  [1153, 775],
  [938, 1142],
  [1014, 1331],
];

const arrows = [
  [628, 652, -115],
  [777, 836, -115],
  [846, 948, -115],
  [995, 580, -115],
  [1083, 607, -15],
  [1002, 654, -20],
  [984, 687, 55],
  [941, 689, -45],
  [903, 767, -115],
  [680, 1189, 175],
  [771, 1218, -8],
  [838, 1220, 65],
  [424, 1300, 175],
  [489, 1310, -45],
  [1004, 1087, -175],
  [1061, 1116, -140],
  [1027, 1145, -10],
  [935, 1124, -115],
  [1107, 1164, -130],
  [1158, 1068, -20],
  [1236, 1030, -20],
  [891, 1336, 60],
];

const stops = [
  [501, 525, "16"],
  [590, 659, "14"],
  [926, 846, "3"],
  [1172, 621, "4"],
  [1154, 628, ""],
  [1140, 632, ""],
  [1142, 634, "13"],
  [1158, 798, ""],
  [1155, 800, ""],
  [1151, 796, "8"],
  [1166, 772, "9"],
  [1219, 752, "5"],
  [1190, 755, "10"],
  [1223, 836, "6"],
  [554, 1368, "2"],
  [580, 1370, "17"],
];

const Paths = ({ list, extra = 0, stroke }) =>
  list.map(([tile, width, d], i) => (
    <path
      key={i}
      d={d}
      transform={tiles[tile]}
      stroke={stroke}
      strokeWidth={width + extra}
      vectorEffect="non-scaling-stroke"
    />
  ));

const PinText = styled.text`
  fill: #fff;
  stroke: #8a74b0;
  stroke-width: 1px;
  paint-order: stroke;
  font: 700 24px "Liberation Sans", sans-serif;
  text-anchor: middle;
`;

const StopPin = ({ x, y, label }) => (
  <g transform={`translate(${x} ${y})`}>
    <path
      d="M0 0C-4 -9 -19.500 -17 -19.500 -31A19.500 19.500 0 0 1 19.500 -31C19.500 -17 4 -9 0 0z"
      fill="#a984e3"
      stroke="#0d0716"
      strokeWidth="2"
    />
    <PinText y="-18">{label}</PinText>
  </g>
);

const MapLabel = styled.text`
  fill: ${({ $color }) => $color};
  stroke: #fff;
  stroke-width: 3px;
  stroke-linejoin: round;
  paint-order: stroke;
  font-family: Roboto, sans-serif;
  font-size: ${({ $size }) => $size || 22}px;
  font-weight: ${({ $bold }) => ($bold ? 500 : 400)};
  text-anchor: ${({ $anchor }) => $anchor || "start"};
`;

const District = styled(MapLabel)`
  letter-spacing: 3px;
`;

const ShieldText = styled.text`
  fill: #4b3f13;
  font: 500 16px Roboto, sans-serif;
  text-anchor: middle;
`;

const GoogleMark = styled.text`
  fill: #fff;
  stroke: #9b9fa3;
  stroke-width: 4px;
  paint-order: stroke;
  font: 500 30px Roboto, sans-serif;
`;

const RouteMap = () => (
  <svg viewBox="415 408 893 1084" preserveAspectRatio="xMinYMin slice">
    {areas.map(([tile, fill, d], i) => (
      <path key={i} d={d} fill={fill} transform={tiles[tile]} />
    ))}
    <g fill="none" strokeLinejoin="round" strokeLinecap="round">
      <Paths list={roads} extra={3} stroke="#dfe2e7" />
      <Paths list={roads} stroke="#fff" />
      <g stroke="#cccfd4" strokeWidth="1.400">
        {railOffsets.map((i) => (
          <path key={i} d={rail(i)} />
        ))}
        {[-4, -2, 0, 2, 4].map((i) => (
          <path key={i} d={`M${873 + i} 960L${892 + i * 1.4} 1020L${923 + i} 1081`} />
        ))}
      </g>
      <Paths
        list={thinGreen.map(([tile, d]) => [tile, 1.6, d])}
        stroke="#4aa566"
      />
    </g>
    <g stroke="#a3a8bd" strokeWidth="2.500" fill="#a3a8bd">
      {arrows.map(([x, y, r]) => (
        <path
          key={`${x}-${y}`}
          d="M-7 0H2M2 -3.500L7 0 2 3.500z"
          transform={`translate(${x} ${y}) rotate(${r})`}
        />
      ))}
    </g>
    {shields.map(([x, y, text]) => (
      <g key={`${x}-${y}`}>
        <rect x={x} y={y} width="46" height="19" fill="#fdd948" stroke="#e3b32b" />
        <ShieldText x={x + 23} y={y + 15}>
          {text}
        </ShieldText>
      </g>
    ))}
    {labels.map((l) => (
      <MapLabel
        key={`${l.x}-${l.y}`}
        transform={`translate(${l.x} ${l.y}) rotate(${l.r || 0})`}
        $color={l.c}
        $size={l.s}
        $bold={l.b}
        $anchor={l.a}
      >
        {l.t}
      </MapLabel>
    ))}
    {districts.map((d) => (
      <District key={`${d.x}-${d.y}`} $color="#55585c" $bold $anchor="middle">
        {d.lines.map((line, i) => (
          <tspan key={line} x={d.x} y={d.y + i * 23.500}>
            {line}
          </tspan>
        ))}
      </District>
    ))}
    <District x="1027" y="1484" $color="#bdbfc2" $bold>
      SAURUPT
    </District>
    {stations.map(([x, y, s]) => (
      <g key={`${x}-${y}`} transform={`translate(${x} ${y})`}>
        <rect width={s} height="24" rx="4" fill="#1a6fe0" />
        <path
          d="M5 7q0-2 2-2h10q2 0 2 2v10h-2v2h-2v-2H9v2H7v-2H5zM7 8v4h4V8zM13 8v4h4V8z"
          fill="#fff"
          fillRule="evenodd"
        />
      </g>
    ))}
    {trams.map(([x, y]) => (
      <g key={`${x}-${y}`} transform={`translate(${x} ${y})`}>
        <rect width="22" height="21" rx="3" fill="#1a6fe0" />
        <path
          d="M7 3h8v2h-3v2h2q2 0 2 2v7l2 2h-2l-1-1H7l-1 1H4l2-2V9q0-2 2-2h2V5H7zM8.500 9v3.500h5V9z"
          fill="#fff"
          fillRule="evenodd"
        />
      </g>
    ))}
    {pois.map((p) => (
      <g key={`${p.x}-${p.y}`} transform={`translate(${p.x} ${p.y})`} fill="#fff">
        <path
          d="M0 0C-2 -12 -16.500 -18 -16.500 -31A16.500 16.500 0 0 1 16.500 -31C16.500 -18 2 -12 0 0z"
          fill={p.c}
          stroke="#fff"
          strokeOpacity=".6"
        />
        {poiGlyph[p.kind]}
      </g>
    ))}
    <g fill="none" strokeLinejoin="round" opacity=".95">
      <Paths list={routes.map(([tile, d]) => [tile, 5, d])} stroke="#a582df" />
    </g>
    <path d="M536 1335q0 20 12 38l4 3 2-12z" fill="#0fb3c6" />
    {stops.map(([x, y, label]) => (
      <StopPin key={`${x}-${y}`} x={x} y={y} label={label} />
    ))}
    <g transform="translate(595 1331)">
      <path d="M0 -23L20 -12V12L0 23 -20 12V-12z" fill="#2157cf" />
      <path
        d="M0 10C-2 3 -8 1 -8 -5A8 8 0 0 1 8 -5C8 1 2 3 0 10z"
        fill="#fff"
      />
      <circle cy="-5" r="3.500" fill="#2157cf" />
    </g>
    <GoogleMark x="432" y="1478">
      Google
    </GoogleMark>
  </svg>
);

/* ---------- details column ---------- */

const Details = styled.section`
  display: flex;
  flex-direction: column;
  min-height: 0;
  overflow: hidden;
  margin: 0 -12px;
  padding: 0 12px;
`;

const CloseRow = styled.div`
  display: flex;
  align-items: center;
  justify-content: flex-end;
  flex: none;
  height: 80px;
  padding-right: 26px;
  button {
    display: grid;
    place-items: center;
    width: 90px;
    height: 53px;
    border: 2px solid #c4c4c4;
    border-radius: 3px;
    color: #444;
  }
`;

const FilterButton = styled.button`
  display: flex;
  align-items: center;
  align-self: flex-start;
  flex: none;
  gap: 17px;
  height: 43px;
  margin: 0 0 13px 3px;
  padding: 0 34px 0 38px;
  border-radius: 22px;
  background: #efefef;
  color: #777;
  font-size: 21px;
`;

const Card = styled.article`
  flex: none;
  margin-bottom: 24px;
  border: 2px solid #dfe1e4;
  border-radius: 3px;
  background: #fff;
  box-shadow: 0 0 30px rgba(80, 80, 120, 0.09);
`;

const StartCard = styled(Card)`
  display: flex;
  align-items: center;
  gap: 66px;
  height: 80px;
  padding-left: 30px;
  background: #efefef;
`;

const StopHeader = styled.header`
  display: flex;
  align-items: center;
  height: 128px;
  padding: 0 30px 0 16px;
  background: #efefef;
`;

const StopNumber = styled.span`
  display: grid;
  place-items: center;
  height: 32px;
  padding: 0 12px;
  border-radius: 16px;
  background: #046bb3;
  color: #fff;
  font-size: 16px;
  font-weight: 700;
`;

const StopAddress = styled.div`
  margin-left: 20px;
  font-size: 22px;
  line-height: 32px;
`;

const Heading = styled.h3`
  font-size: 27px;
  font-weight: 600;
  line-height: 32px;
`;

const TimeTag = styled.span`
  margin-left: auto;
  padding: 0 12px;
  border-radius: 3px;
  background: #046bb3;
  color: #fff;
  font-size: 16px;
  font-weight: 700;
  line-height: 35px;
`;

const MoreButton = styled.button`
  display: flex;
  gap: 6px;
  width: 24px;
  margin-left: 12px;
  span {
    width: 4px;
    height: 4px;
    border-radius: 50%;
    background: #222;
  }
`;

const StopSection = styled.section`
  margin: 0 25px;
  padding: ${({ $first }) => ($first ? "16px 2px 27px" : "24px 2px 10px")};
  border-top: ${({ $first }) => ($first ? "none" : "2px solid #dedede")};
`;

const Columns = styled.div`
  display: grid;
  grid-template-columns: 524fr 475fr;
  margin-top: 12px;
`;

const Label = styled.b`
  font-weight: 600;
`;

const PhoneLink = styled.a`
  color: #1a6fa8;
  text-underline-offset: 3px;
`;

const AddButton = styled.button`
  display: block;
  margin: 5px 0 0 28px;
`;

const HelpButton = styled.button`
  position: absolute;
  right: 32px;
  bottom: 22px;
  display: flex;
  align-items: center;
  justify-content: center;
  gap: 14px;
  width: 180px;
  height: 77px;
  border-radius: 39px;
  background: #1762f8;
  color: #fff;
  font-size: 26px;
  font-weight: 700;
`;

const StopCard = ({ number, name, street, time, duration, id }) => (
  <Card>
    <StopHeader>
      <StopNumber>{number}</StopNumber>
      <StopAddress>
        <Heading>{name}</Heading>
        <p>
          <Label>Dirección :</Label> {street}
          <br />
          BLANDAN 54000 NANCY
        </p>
      </StopAddress>
      <TimeTag>{time}</TimeTag>
      <MoreButton aria-label="Más">
        <span />
        <span />
        <span />
      </MoreButton>
    </StopHeader>
    <StopSection $first>
      <Heading>Detalles del cliente</Heading>
      <Columns>
        <div>
          <p>
            <Label>Número de teléfono móvil</Label> :{" "}
            <PhoneLink href="tel:+33612345678">+33 6 12 34 56 78</PhoneLink>
          </p>
          <p>
            <Label>Horas de apertura :</Label> Siempre abierto
          </p>
        </div>
        <div>
          <Label>Archivos adjuntos del cliente:</Label>
          <AddButton aria-label="Añadir archivo del cliente">
            <CirclePlus />
          </AddButton>
        </div>
      </Columns>
    </StopSection>
    <StopSection>
      <Heading>Detalles de la intervencion</Heading>
      <Columns>
        <div>
          <p>
            <Label>Duración</Label> : {duration}
          </p>
          <p>
            <Label>Franja horaria :</Label> 08:00 ↔ 18:00
          </p>
          <p>
            <Label>Agente asignado :</Label>
          </p>
          <p>
            <AgentDot $size={17} /> Paul Wagner
          </p>
          <p>
            <Label>Id :</Label> {id}
          </p>
        </div>
        <div>
          <Label>Archivos adjuntos de la intervencion:</Label>
          <AddButton aria-label="Añadir archivo de la intervencion">
            <CirclePlus />
          </AddButton>
        </div>
      </Columns>
    </StopSection>
  </Card>
);

export default function App() {
  return (
    <>
      <GlobalStyle />
      <Frame>
        <Header>
          <Logo href="#">
            <svg width="40" height="40" viewBox="0 0 40 40">
              <defs>
                <linearGradient id="logo" x1="0" y1="0" x2="1" y2="0.4">
                  <stop offset="0" stopColor="#18a0f0" />
                  <stop offset=".45" stopColor="#1660e8" />
                  <stop offset="1" stopColor="#6a35ee" />
                </linearGradient>
              </defs>
              <path
                d="M35.500 35.500H19A15.500 15.500 0 1 1 35.500 19z"
                fill="none"
                stroke="url(#logo)"
                strokeWidth="7"
              />
              <path d="M4.500 26A15.500 15.500 0 0 0 20 35.500h4" fill="none" stroke="#1238d8" strokeWidth="7" />
              <path d="M24 35.500h8" fill="none" stroke="#1c9cf0" strokeWidth="7" />
            </svg>
            <span>
              <b>Ants</b>Route
            </span>
          </Logo>
          <Agency>
            <label htmlFor="agency">Local</label>
            <SelectBox>
              <select id="agency" defaultValue="Nancy">
                <option>Nancy</option>
              </select>
              <svg width="17" height="9" viewBox="0 0 17 9">
                <path d="M0 0h17L8.500 9z" fill="#777" />
              </svg>
            </SelectBox>
          </Agency>
          <Nav>
            <NavLink href="#">
              <CalendarIcon />
              Programar
            </NavLink>
            <NavLink href="#" $active>
              <GaugeIcon />
              Organizar
            </NavLink>
            <NavLink href="#">
              <SignIcon />
              Seguir
            </NavLink>
            <NavLink href="#">
              <ChartIcon />
              Analizar
            </NavLink>
          </Nav>
          <HeaderTools>
            <ToolLink href="#">
              <PeopleIcon />
              Clientes
            </ToolLink>
            <ToolLink href="#">
              <UserGearIcon />
              Recursos
            </ToolLink>
            <ToolLink href="#">
              <GearIcon />
              Configuración
            </ToolLink>
            <button aria-label="Buscar">
              <SearchIcon />
            </button>
            <BellButton aria-label="Notificaciones">
              <BellIcon />
              <span>30</span>
            </BellButton>
            <Avatar>MH</Avatar>
          </HeaderTools>
        </Header>
        <Body>
          <Sidebar>
            <Collapse aria-label="Cerrar menú">
              <Chevron w={10} h={20} />
            </Collapse>
            <SideList>
              <SideLink href="#">
                <AgendaIcon />
                Agenda
              </SideLink>
              <SideLink href="#" $active>
                <RoadIcon />
                Rutas
              </SideLink>
              <SideLink href="#">
                <MapIcon />
                Mapas
              </SideLink>
              <SideLink href="#">
                <ListIcon />
                Lista de intervenciones
              </SideLink>
            </SideList>
          </Sidebar>
          <Main>
            <Toolbar>
              <PageTitle>Ruta</PageTitle>
              <DatePicker>
                <button aria-label="Calendario">
                  <CalendarIcon />
                </button>
                <button aria-label="Día anterior">
                  <Chevron />
                </button>
                <input aria-label="Fecha" defaultValue="12/12/2023" />
                <button aria-label="Día siguiente">
                  <Chevron right />
                </button>
              </DatePicker>
              <Actions>
                <Reoptimize>
                  <RocketIcon />
                  Reoptimizar rutas
                </Reoptimize>
                <RoundButton aria-label="Añadir">
                  <PlusIcon />
                </RoundButton>
                <RoundButton $green aria-label="Descargar">
                  <CloudIcon />
                </RoundButton>
                <RoundButton $green aria-label="Bloquear">
                  <LockIcon />
                </RoundButton>
                <RoundButton aria-label="Enviar">
                  <MailIcon />
                </RoundButton>
              </Actions>
            </Toolbar>
            <Content>
              <RouteColumn>
                <RouteTitle>
                  <button aria-label="Ruta anterior">
                    <CircleChevron />
                  </button>
                  <h2>Rutas - Paul Wagner</h2>
                  <AgentDot $size={33} />
                  <button aria-label="Ruta siguiente">
                    <CircleChevron right />
                  </button>
                </RouteTitle>
                <Stats>
                  <Stat>
                    <FlagIcon />
                    <span>8:00</span>
                  </Stat>
                  <Stat>
                    <CheckeredIcon />
                    <span>16:59</span>
                  </Stat>
                  <Stat $narrow>
                    <RoadIcon w={38} h={25} />
                    <span>
                      7,2
                      <br />
                      km
                    </span>
                  </Stat>
                  <Stat>
                    <PlaceIcon />
                    <span>17</span>
                  </Stat>
                  <Stat>
                    <CarIcon />
                    <span>14min</span>
                  </Stat>
                  <Stat>
                    <PersonIcon />
                    <span>8h45</span>
                  </Stat>
                  <Stat>
                    <MoneyIcon />
                    <span>141,23 €</span>
                  </Stat>
                </Stats>
                <MapBox>
                  <RouteMap />
                  <ZoomControl>
                    <button aria-label="Acercar">
                      <Icon w={30} h={30} sw={7}>
                        <path d="M15 0v30M0 15h30" />
                      </Icon>
                    </button>
                    <button aria-label="Alejar">
                      <Icon w={30} h={6} sw={6}>
                        <path d="M0 3h30" />
                      </Icon>
                    </button>
                  </ZoomControl>
                  <MapFooter>
                    <span>Données cartographiques ©2023</span>
                    <Scale>200 m</Scale>
                    <a href="#">Conditions d'utilisation</a>
                    <Icon w={15} h={16} sw={1.800}>
                      <path d="M4 4h7v8q-3.500 4-7 0zM4 1l2 2M11 1L9 3M0 5h4M0 9h4M0 13h4M11 5h4M11 9h4M11 13h4M6 7h3M6 10h3" />
                    </Icon>
                  </MapFooter>
                </MapBox>
              </RouteColumn>
              <Details>
                <CloseRow>
                  <button aria-label="Cerrar">
                    <CloseIcon />
                  </button>
                </CloseRow>
                <FilterButton>
                  <FilterIcon />
                  Mostrar opciones de visualización
                </FilterButton>
                <StartCard>
                  <FlagIcon />
                  <div>
                    <p>
                      <Label>Hora de inicio prevista de la ruta :</Label>{" "}
                      12/12/2023 08:00
                    </p>
                    <p>
                      <Label>Salida desde el parking del vehículo :</Label> 92
                      Impasse du Sergent Blandan, Nancy, France
                    </p>
                  </div>
                </StartCard>
                <StopCard
                  number={1}
                  name="Clément Martin"
                  street="11 IMPASSE DU SERGENT"
                  time="08:00"
                  duration="40min"
                  id="15445447"
                />
                <StopCard
                  number={2}
                  name="Marc Thomas"
                  street="2 IMPASSE DU SERGENT"
                  time="08:40"
                  duration="35min"
                  id="15445408"
                />
              </Details>
            </Content>
          </Main>
        </Body>
        <HelpButton>
          <ChatIcon />
          Aide
        </HelpButton>
      </Frame>
    </>
  );
}
